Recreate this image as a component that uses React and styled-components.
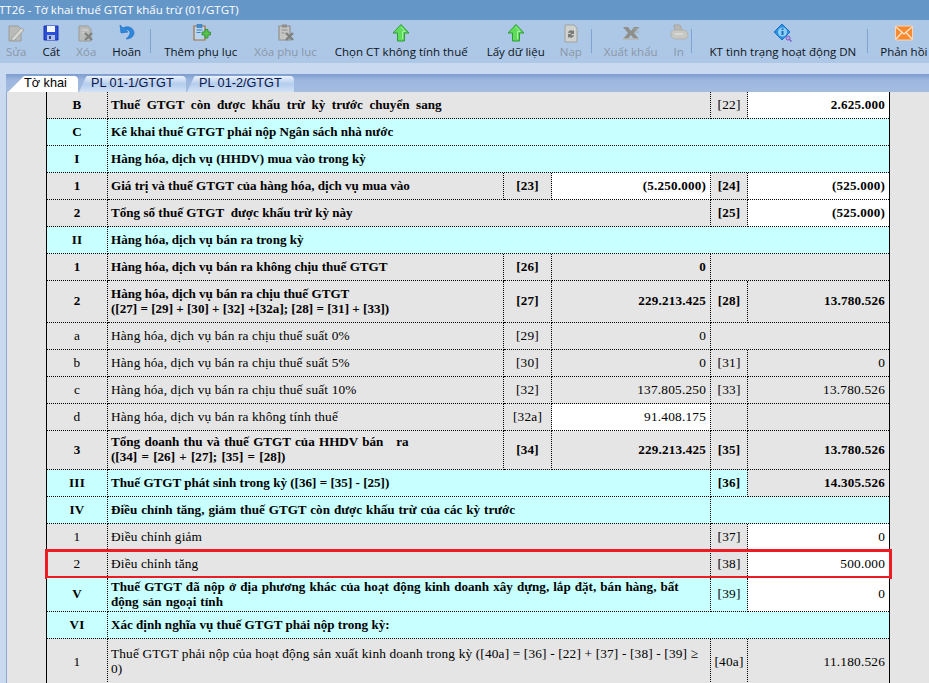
import React from "react";
import styled, { createGlobalStyle } from "styled-components";

const Global = createGlobalStyle`
  html, body { margin: 0; padding: 0; background: #c9daf0; }
  * { box-sizing: border-box; }
`;

const Page = styled.div`
  width: 929px;
  height: 683px;
  overflow: hidden;
  display: flex;
  flex-direction: column;
  background: #c9daf0;
`;

const TitleBar = styled.div`
  flex: none;
  height: 20px;
  background: #6596c8;
  color: #fff;
  font: 11.5px/20px "Open Sans", sans-serif;
  text-indent: -1px;
  white-space: nowrap;
`;

const Toolbar = styled.div`
  flex: none;
  height: 43px;
  background: #adc7e6;
  display: flex;
  align-items: stretch;
`;

const Tool = styled.div`
  flex: none;
  display: flex;
  flex-direction: column;
  align-items: center;
  margin-left: ${(p) => p.$gap}px;
  padding-top: 3px;
  color: ${(p) => (p.$off ? "#8b97a6" : "#0c1420")};
  font: 11.5px/14px "Open Sans", sans-serif;
  white-space: nowrap;
`;

const ToolIcon = styled.svg`
  display: block;
  width: 20px;
  height: 20px;
  margin-bottom: 2px;
`;

const Separator = styled.div`
  flex: none;
  width: 1px;
  height: 24px;
  margin: 9px 0 0 ${(p) => p.$gap}px;
  background: #7ea3d0;
`;

const Band = styled.div`
  flex: none;
  height: 11px;
`;

const TabBar = styled.div`
  flex: none;
  height: 18px;
  margin-left: 6px;
  padding: 2px 0 0 2px;
  background: linear-gradient(#7c9dcf 0, #9db6de 6px, #a4bce0 100%);
  display: flex;
  align-items: stretch;
`;

const Tab = styled.div`
  flex: none;
  width: ${(p) => p.$w}px;
  margin-left: ${(p) => p.$gap}px;
  padding-left: ${(p) => p.$pad}px;
  color: ${(p) => (p.$active ? "#000" : "#0a1648")};
  font: 12.7px/15px "Liberation Sans", sans-serif;
  white-space: nowrap;
  background: ${(p) => (p.$active ? "#fff" : "linear-gradient(#eaf1fb, #b4cdee 50%, #d3e2f6)")};
  clip-path: polygon(
    0 100%,
    ${(p) => p.$slant}px 1px,
    ${(p) => p.$slant + 1}px 0,
    calc(100% - 3px) 0,
    calc(100% - 1px) 1px,
    100% 3px,
    100% 100%
  );
`;

const Body = styled.div`
  flex: 1;
  min-height: 0;
  margin-left: 6px;
  padding-left: 39px;
  border-left: 1px solid #8aaad8;
  background: #e5e5e5;
  overflow: hidden;
`;

const Sheet = styled.table`
  table-layout: fixed;
  width: 844px;
  border-collapse: separate;
  border-spacing: 0;
  border-left: 1px solid #000;
  border-right: 1px solid #000;
  font: 13.33px/15px "Liberation Serif", serif;
  color: #000;
`;

const Row = styled.tr`
  height: ${(p) => p.$h}px;
  position: relative;
  ${(p) =>
    p.$mark
      ? `&::after {
          content: "";
          position: absolute;
          top: -2px;
          bottom: -1px;
          left: -2px;
          right: -3px;
          border: 3px solid #ed1c24;
          pointer-events: none;
        }`
      : ""}
`;

const tones = { g: "#e5e5e5", c: "#c8ffff", w: "#ffffff" };

const Cell = styled.td`
  padding: 0 ${(p) => (p.$align === "right" ? 4 : p.$align === "left" ? 2 : 0)}px 2px
    ${(p) => (p.$align === "left" ? 3 : 0)}px;
  background: ${(p) => tones[p.$tone]};
  font-size: ${(p) => (p.$bold ? 13.1 : 13.33)}px;
  font-weight: ${(p) => (p.$bold ? 700 : 400)};
  text-align: ${(p) => p.$align};
  vertical-align: middle;
  border-bottom: 1px dotted #000;
  border-right: ${(p) => (p.$last ? "0" : "1px dotted #000")};
  word-spacing: ${(p) => p.$ws || 0}px;
  letter-spacing: ${(p) => (p.$align === "left" ? (p.$bold ? 0 : 0.15) : 0.2)}px;
`;

const Icon = ({ children }) => <ToolIcon viewBox="0 0 20 20">{children}</ToolIcon>;

const DocGray = () => <path d="M3 3h9l3 3v12H3z" fill="#b9bbb9" stroke="#9a9c9a" />;

const IconEdit = () => (
  <Icon>
    <DocGray />
    <path d="M6 15l9-10 3 2-9 10-4 1z" fill="#d6d6d2" stroke="#a2a4a0" />
  </Icon>
);
const IconSave = () => (
  <Icon>
    <path d="M3 3h14v14H3z" fill="#2b4fd8" stroke="#1a33b0" />
    <path d="M6 3h8v6H6z" fill="#f2f5fc" />
    <path d="M6 12h8v5H6z" fill="#aebfe8" />
    <path d="M8 13h2v3H8z" fill="#27409c" />
  </Icon>
);
const IconDelete = () => (
  <Icon>
    <DocGray />
    <path d="M9 10l7 7M16 10l-7 7" stroke="#80827f" strokeWidth="2.4" />
    <path d="M6 7h6M6 10h2" stroke="#dadada" />
  </Icon>
);
const IconUndo = () => (
  <Icon>
    <path
      d="M3 2l1 8 7-1-3-2c3-1 5 1 5 3 0 2-2 4-4 6 5 0 8-3 8-6 0-5-6-8-11-5z"
      fill="#2d88dc"
      stroke="#1b69bb"
      strokeWidth="0.6"
    />
  </Icon>
);
const IconAdd = () => (
  <Icon>
    <path d="M3 3h11v14H3z" fill="#b8d6f2" stroke="#a6703a" strokeWidth="1.2" />
    <path d="M6 1.5h5v3H6z" fill="#3e8fd8" stroke="#2c6fa8" strokeWidth="0.6" />
    <path d="M5.5 7h6M5.5 9.5h4" stroke="#3f7fc0" />
    <path d="M11 9h3V6.5h3V9h2.500v3H17v3h-3v-3h-3z" fill="#58c34e" stroke="#2c8a2c" strokeWidth="0.8" />
  </Icon>
);
const IconDeleteAdd = () => (
  <Icon>
    <path d="M3 3h11v14H3z" fill="#c4c5c4" stroke="#8f908e" strokeWidth="1.2" />
    <path d="M6 1.5h5v3H6z" fill="#8d8e8c" />
    <path d="M5.5 7h6M5.5 10h3" stroke="#8f908e" />
    <path d="M10 10l7 7M17 10l-7 7" stroke="#7e807d" strokeWidth="2.4" />
  </Icon>
);
const IconUp = () => (
  <Icon>
    <path
      d="M10 1.5L18 10h-4.500v8h-7v-8H2z"
      fill="#5fdc5a"
      stroke="#2f9c35"
      strokeWidth="1"
      strokeLinejoin="round"
    />
    <path d="M10 4l4 4.500h-2.500V16" stroke="#a4f2a0" fill="none" />
  </Icon>
);
const IconReload = () => (
  <Icon>
    <path d="M4 2h9l3 3v14H4z" fill="#d0d2d0" stroke="#a0a29f" />
    <path
      d="M7 10a3 3 0 0 1 5-2l1-1v4H9l1-1a1.500 1.500 0 0 0-2 0zM13 12a3 3 0 0 1-5 2l-1 1v-4h4l-1 1a1.500 1.500 0 0 0 2 0z"
      fill="#777a77"
    />
  </Icon>
);
const IconExcel = () => (
  <Icon>
    <path d="M2 4h5l3 4 3-4h5l-5 6 5 6h-5l-3-4-3 4H2l5-6z" fill="#8e8f8b" />
    <path d="M2 16h16" stroke="#b6b7b3" strokeWidth="1.5" />
    <path d="M12 6h6M13 9h5" stroke="#a8a9a5" />
  </Icon>
);
const IconPrint = () => (
  <Icon>
    <path d="M5 2h6l2 5H6z" fill="#b9b9b6" stroke="#a5a5a2" />
    <path d="M2 10c0-2 2-3 4-3h8c3 0 5 2 5 5s-2 4-4 4H6c-2 0-4-2-4-4z" fill="#c7c7c4" stroke="#b2b2ae" />
    <path d="M6 11h8" stroke="#e8e8e6" />
  </Icon>
);
const IconCheck = () => (
  <Icon>
    <path d="M9 1l8 8-8 8-8-8z" fill="#2c8fe0" stroke="#1c74c4" strokeWidth="1" strokeLinejoin="round" />
    <circle cx="9.5" cy="9" r="4.500" fill="#8fd0f7" />
    <path d="M8.500 5.500h2V7h-2zM8.500 8h2v4h-2z" fill="#1a6ab8" />
    <circle cx="15" cy="15" r="2" fill="#b9a6ea" stroke="#7b5fc7" />
    <path d="M16.500 16.500l2 2" stroke="#7b5fc7" strokeWidth="1.4" />
  </Icon>
);
const IconMail = () => (
  <Icon>
    <path d="M1.500 3h17v14h-17z" fill="#f78a2e" stroke="#fbd4b0" />
    <path d="M2 4l8 7 8-7M2 16l6-6.500M18 16l-6-6.500" stroke="#fde7d0" strokeWidth="1.3" fill="none" />
  </Icon>
);

const lbl = (t, tone, bold, span, ws) => ({ t, tone, bold, span, align: "left", ws });
const ctr = (t, tone, bold) => ({ t, tone, bold, align: "center" });
const num = (t, tone, bold) => ({ t, tone, bold, align: "right" });
const blank = (tone, span) => ({ t: "", tone, span, align: "left" });

const rows = [
  { h: 27, cells: [ctr("B", "g", 1), lbl("Thuế GTGT còn được khấu trừ kỳ trước chuyển sang", "g", 1, 3, 3.3), ctr("[22]", "g"), num("2.625.000", "w", 1)] },
  { h: 27, cells: [ctr("C", "c", 1), lbl("Kê khai thuế GTGT phải nộp Ngân sách nhà nước", "c", 1, 5)] },
  { h: 27, cells: [ctr("I", "c", 1), lbl("Hàng hóa, dịch vụ (HHDV) mua vào trong kỳ", "c", 1, 5)] },
  { h: 27, cells: [ctr("1", "g", 1), lbl("Giá trị và thuế GTGT của hàng hóa, dịch vụ mua vào", "g", 1), ctr("[23]", "g", 1), num("(5.250.000)", "w", 1), ctr("[24]", "g", 1), num("(525.000)", "w", 1)] },
  { h: 27, cells: [ctr("2", "g", 1), lbl(<>Tổng số thuế GTGT&nbsp; được khấu trừ kỳ này</>, "g", 1, 3), ctr("[25]", "g", 1), num("(525.000)", "w", 1)] },
  { h: 27, cells: [ctr("II", "c", 1), lbl("Hàng hóa, dịch vụ bán ra trong kỳ", "c", 1, 5)] },
  { h: 27, cells: [ctr("1", "g", 1), lbl("Hàng hóa, dịch vụ bán ra không chịu thuế GTGT", "g", 1), ctr("[26]", "g", 1), num("0", "g", 1), blank("g", 2)] },
  { h: 42, cells: [ctr("2", "g", 1), lbl(<>Hàng hóa, dịch vụ bán ra chịu thuế GTGT<br />([27] = [29] + [30] + [32] +[32a]; [28] = [31] + [33])</>, "g", 1), ctr("[27]", "g", 1), num("229.213.425", "g", 1), ctr("[28]", "g", 1), num("13.780.526", "g", 1)] },
  { h: 27, cells: [ctr("a", "g"), lbl("Hàng hóa, dịch vụ bán ra chịu thuế suất 0%", "g"), ctr("[29]", "g"), num("0", "g"), blank("g", 2)] },
  { h: 27, cells: [ctr("b", "g"), lbl("Hàng hóa, dịch vụ bán ra chịu thuế suất 5%", "g"), ctr("[30]", "g"), num("0", "g"), ctr("[31]", "g"), num("0", "g")] },
  { h: 27, cells: [ctr("c", "g"), lbl("Hàng hóa, dịch vụ bán ra chịu thuế suất 10%", "g"), ctr("[32]", "g"), num("137.805.250", "g"), ctr("[33]", "g"), num("13.780.526", "g")] },
  { h: 27, cells: [ctr("d", "g"), lbl("Hàng hóa, dịch vụ bán ra không tính thuế", "g"), ctr("[32a]", "g"), num("91.408.175", "w"), blank("g"), blank("g")] },
  { h: 39, cells: [ctr("3", "g", 1), lbl(<>Tổng doanh thu và thuế GTGT của HHDV bán&nbsp;&nbsp;&nbsp;ra<br />([34] = [26] + [27]; [35] = [28])</>, "g", 1, 1, 1), ctr("[34]", "g", 1), num("229.213.425", "g", 1), ctr("[35]", "g", 1), num("13.780.526", "g", 1)] },
  { h: 27, cells: [ctr("III", "c", 1), lbl("Thuế GTGT phát sinh trong kỳ ([36] = [35] - [25])", "c", 1, 3), ctr("[36]", "c", 1), num("14.305.526", "g", 1)] },
  { h: 27, cells: [ctr("IV", "c", 1), lbl("Điều chỉnh tăng, giảm thuế GTGT còn được khấu trừ của các kỳ trước", "c", 1, 3, 0.7), blank("c", 2)] },
  { h: 27, cells: [ctr("1", "g"), lbl("Điều chỉnh giảm", "g", 0, 3), ctr("[37]", "g"), num("0", "w")] },
  { h: 27, mark: true, cells: [ctr("2", "g"), lbl("Điều chỉnh tăng", "g", 0, 3), ctr("[38]", "g"), num("500.000", "w")] },
  { h: 34, cells: [ctr("V", "c", 1), lbl(<>Thuế GTGT đã nộp ở địa phương khác của hoạt động kinh doanh xây dựng, lắp đặt, bán hàng, bất<br />động sản ngoại tỉnh</>, "c", 1, 3, 0.8), ctr("[39]", "c"), num("0", "w")] },
  { h: 27, cells: [ctr("VI", "c", 1), lbl("Xác định nghĩa vụ thuế GTGT phải nộp trong kỳ:", "c", 1, 5)] },
  { h: 47, cells: [ctr("1", "g"), lbl(<>Thuế GTGT phải nộp của hoạt động sản xuất kinh doanh trong kỳ ([40a] = [36] - [22] + [37] - [38] - [39] ≥<br />0)</>, "g", 0, 3), ctr("[40a]", "g"), num("11.180.526", "g")] },
];

const widths = [61, 396, 48, 159, 37, 141];

export default function App() {
  return (
    <Page>
      <Global />
      <TitleBar>TT26 - Tờ khai thuế GTGT khấu trừ (01/GTGT)</TitleBar>
      <Toolbar>
        <Tool $off $gap={6}><IconEdit />Sửa</Tool>
        <Tool $gap={15}><IconSave />Cất</Tool>
        <Tool $off $gap={15}><IconDelete />Xóa</Tool>
        <Tool $gap={16}><IconUndo />Hoãn</Tool>
        <Separator $gap={9} />
        <Tool $gap={13}><IconAdd />Thêm phụ lục</Tool>
        <Tool $off $gap={17}><IconDeleteAdd />Xóa phụ lục</Tool>
        <Tool $gap={18}><IconUp />Chọn CT không tính thuế</Tool>
        <Tool $gap={19}><IconUp />Lấy dữ liệu</Tool>
        <Tool $off $gap={15}><IconReload />Nạp</Tool>
        <Separator $gap={9} />
        <Tool $off $gap={12}><IconExcel />Xuất khẩu</Tool>
        <Tool $off $gap={11}><IconPrint />In</Tool>
        <Separator $gap={2} />
        <Tool $gap={18}><IconCheck />KT tình trạng hoạt động DN</Tool>
        <Separator $gap={11} />
        <Tool $gap={12}><IconMail />Phản hồi</Tool>
      </Toolbar>
      <Band />
      <TabBar>
        <Tab $active $w={70} $gap={0} $pad={16} $slant={15}>Tờ khai</Tab>
        <Tab $w={107} $gap={1} $pad={12} $slant={7}>PL 01-1/GTGT</Tab>
        <Tab $w={107} $gap={1} $pad={12} $slant={7}>PL 01-2/GTGT</Tab>
      </TabBar>
      <Body>
        <Sheet>
          <colgroup>
            {widths.map((w, i) => (
              <col key={i} style={{ width: w }} />
            ))}
          </colgroup>
          <tbody>
            {rows.map((r, i) => {
              const used = r.cells.reduce((s, c) => s + (c.span || 1), 0);
              return (
                <Row key={i} $h={r.h} $mark={r.mark}>
                  {r.cells.map((c, j) => (
                    <Cell
                      key={j}
                      colSpan={c.span || 1}
                      $tone={c.tone}
                      $bold={c.bold}
                      $align={c.align}
                      $ws={c.ws}
                      $last={j === r.cells.length - 1 && used === 6}
                    >
                      {c.t}
                    </Cell>
                  ))}
                </Row>
              );
            })}
          </tbody>
        </Sheet>
      </Body>
    </Page>
  );
}
